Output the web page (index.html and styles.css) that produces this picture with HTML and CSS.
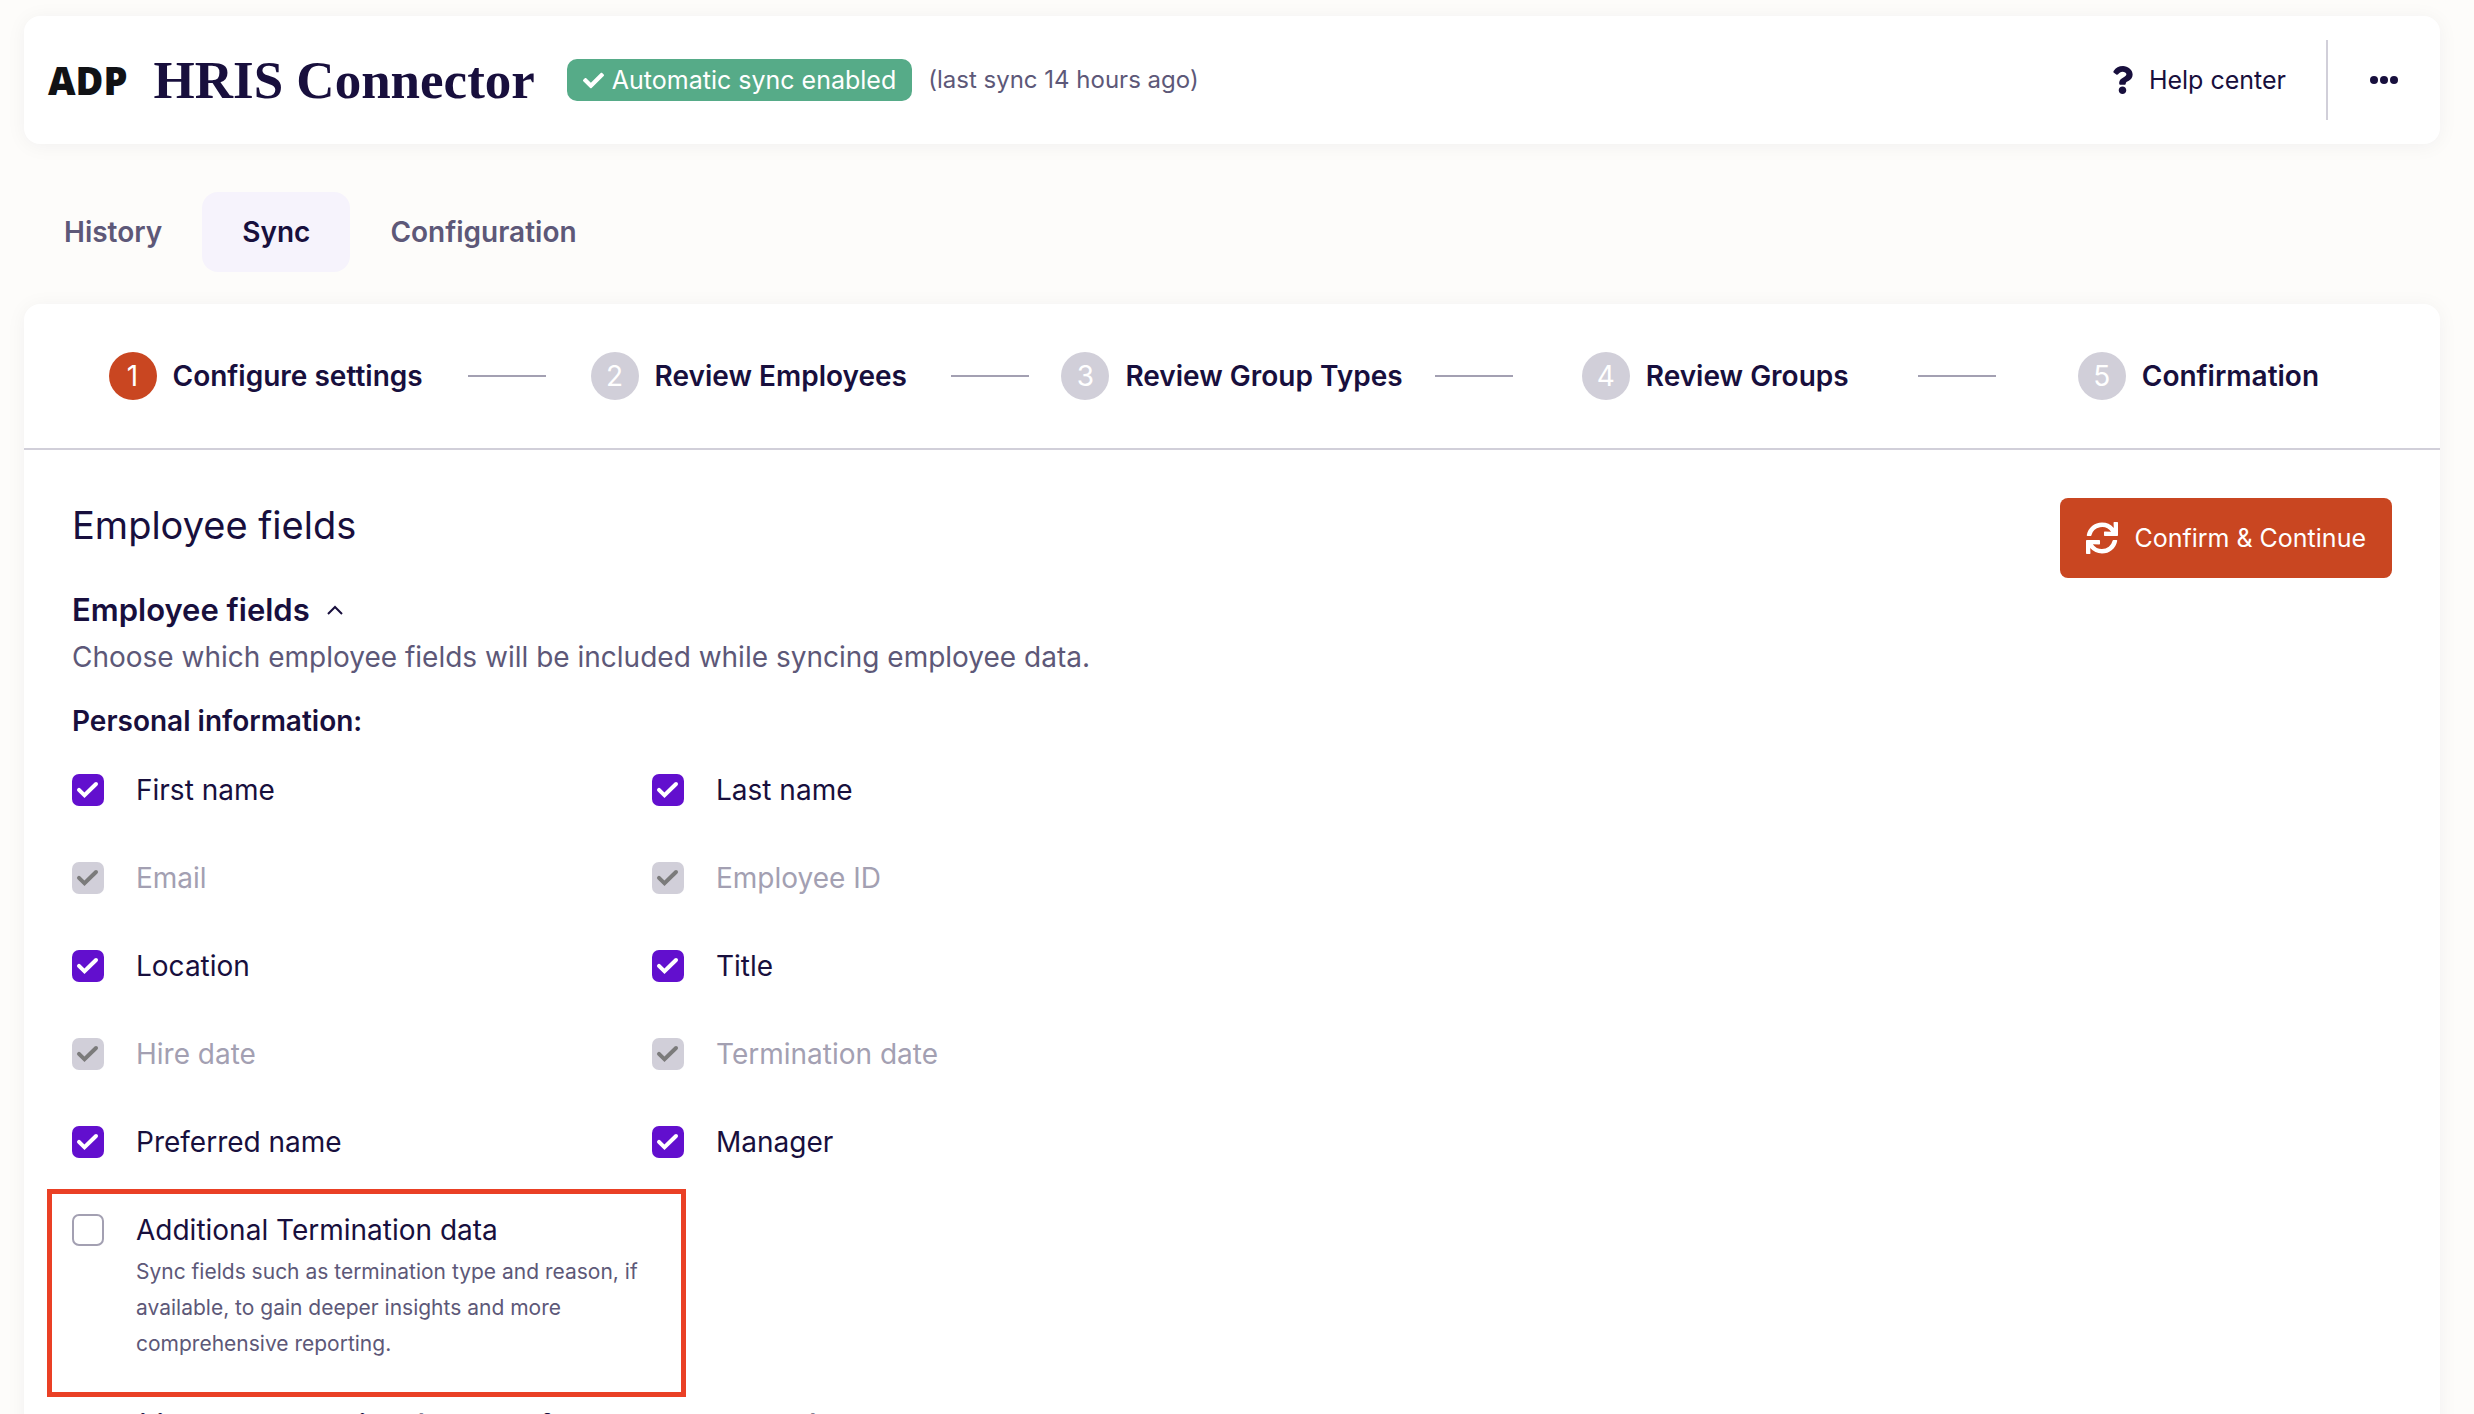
FILE: index.html
```html
<!DOCTYPE html>
<html lang="en">
<head>
<meta charset="utf-8">
<meta name="viewport" content="width=device-width, initial-scale=1">
<title>HRIS Connector</title>
<link rel="stylesheet" href="styles.css">
</head>
<body>
<div class="app">
  <header class="topbar">
    <span class="brand">ADP</span>
    <h1 class="title">HRIS Connector</h1>
    <span class="badge">
      <svg class="badge-icon" viewBox="0 0 512 512" aria-hidden="true"><path fill="currentColor" d="M173.898 439.404l-166.4-166.4c-9.997-9.997-9.997-26.206 0-36.204l36.203-36.204c9.997-9.998 26.207-9.998 36.204 0L192 312.69 432.095 72.596c9.997-9.997 26.207-9.997 36.204 0l36.203 36.204c9.997 9.997 9.997 26.206 0 36.204l-294.4 294.401c-9.998 9.997-26.207 9.997-36.204-.001z"/></svg>
      Automatic sync enabled
    </span>
    <span class="last-sync">(last sync 14 hours ago)</span>
    <a class="help" href="#help">
      <svg class="help-icon" viewBox="0 0 384 512" aria-hidden="true"><path fill="currentColor" d="M202.021 0C122.202 0 70.503 32.703 29.914 91.026c-7.363 10.58-5.093 25.086 5.178 32.874l43.138 32.709c10.373 7.865 25.132 6.026 33.253-4.148 25.049-31.381 43.63-49.449 82.757-49.449 30.764 0 68.816 19.799 68.816 49.631 0 22.552-18.617 34.134-48.993 51.164-35.423 19.86-82.299 44.576-82.299 106.405V320c0 13.255 10.745 24 24 24h72.471c13.255 0 24-10.745 24-24v-5.773c0-42.86 125.268-44.645 125.268-160.627C377.504 66.256 286.902 0 202.021 0zM192 373.459c-38.196 0-69.271 31.075-69.271 69.271 0 38.195 31.075 69.27 69.271 69.27s69.271-31.075 69.271-69.271-31.075-69.27-69.271-69.27z"/></svg>
      Help center
    </a>
    <button class="more" type="button" aria-label="More actions">
      <svg class="more-icon" viewBox="0 0 28 8" aria-hidden="true"><g fill="currentColor"><circle cx="4" cy="4" r="4"/><circle cx="14" cy="4" r="4"/><circle cx="24" cy="4" r="4"/></g></svg>
    </button>
  </header>

  <nav class="tabs" aria-label="Sections">
    <a class="tab" href="#history">History</a>
    <a class="tab tab-active" href="#sync" aria-current="page">Sync</a>
    <a class="tab" href="#configuration">Configuration</a>
  </nav>

  <main class="panel">
    <ol class="steps">
      <li class="step step-current"><span class="step-body"><span class="step-number">1</span>Configure settings</span></li>
      <li class="step"><span class="step-body"><span class="step-number">2</span>Review Employees</span></li>
      <li class="step"><span class="step-body"><span class="step-number">3</span>Review Group Types</span></li>
      <li class="step"><span class="step-body"><span class="step-number">4</span>Review Groups</span></li>
      <li class="step"><span class="step-body"><span class="step-number">5</span>Confirmation</span></li>
    </ol>

    <div class="content">
      <div class="intro">
        <div class="intro-text">
          <h2 class="heading">Employee fields</h2>
          <h3 class="subheading">
            <button class="toggle" type="button" aria-expanded="true">
              Employee fields
              <svg class="chevron" viewBox="0 0 16 10" aria-hidden="true"><path d="M1 9l7-7 7 7" fill="none" stroke="currentColor" stroke-width="2"/></svg>
            </button>
          </h3>
          <p class="lead">Choose which employee fields will be included while syncing employee data.</p>
        </div>
        <button class="confirm" type="button">
          <svg class="confirm-icon" viewBox="0 0 512 512" aria-hidden="true"><path fill="currentColor" d="M440.65 12.57l4 82.77A247.16 247.16 0 0 0 255.83 8C134.73 8 33.91 94.92 12.29 209.82A12 12 0 0 0 24.09 224h49.05a12 12 0 0 0 11.67-9.26 175.91 175.91 0 0 1 317-56.94l-101.46-4.86a12 12 0 0 0-12.57 12v47.41a12 12 0 0 0 12 12H500a12 12 0 0 0 12-12V12a12 12 0 0 0-12-12h-47.37a12 12 0 0 0-11.98 12.57zM255.83 432a175.61 175.61 0 0 1-146-77.8l101.8 4.87a12 12 0 0 0 12.57-12v-47.4a12 12 0 0 0-12-12H12a12 12 0 0 0-12 12V500a12 12 0 0 0 12 12h47.35a12 12 0 0 0 12-12.6l-4.15-82.57A247.17 247.17 0 0 0 255.83 504c121.11 0 221.93-86.92 243.55-201.82a12 12 0 0 0-11.8-14.18h-49.05a12 12 0 0 0-11.67 9.26A175.86 175.86 0 0 1 255.83 432z"/></svg>
          Confirm &amp; Continue
        </button>
      </div>

      <section aria-labelledby="personal">
        <h4 class="group-title" id="personal">Personal information:</h4>
        <div class="fields">
          <div class="field"><input class="check" type="checkbox" id="first-name" checked><label for="first-name">First name</label></div>
          <div class="field"><input class="check" type="checkbox" id="last-name" checked><label for="last-name">Last name</label></div>
          <div class="field"><input class="check" type="checkbox" id="email" checked disabled><label for="email">Email</label></div>
          <div class="field"><input class="check" type="checkbox" id="employee-id" checked disabled><label for="employee-id">Employee ID</label></div>
          <div class="field"><input class="check" type="checkbox" id="location" checked><label for="location">Location</label></div>
          <div class="field"><input class="check" type="checkbox" id="job-title" checked><label for="job-title">Title</label></div>
          <div class="field"><input class="check" type="checkbox" id="hire-date" checked disabled><label for="hire-date">Hire date</label></div>
          <div class="field"><input class="check" type="checkbox" id="termination-date" checked disabled><label for="termination-date">Termination date</label></div>
          <div class="field"><input class="check" type="checkbox" id="preferred-name" checked><label for="preferred-name">Preferred name</label></div>
          <div class="field"><input class="check" type="checkbox" id="manager" checked><label for="manager">Manager</label></div>
          <div class="field field-highlighted">
            <input class="check" type="checkbox" id="termination-data" aria-describedby="termination-help">
            <div>
              <label for="termination-data">Additional Termination data</label>
              <p class="hint" id="termination-help">Sync fields such as termination type and reason, if available, to gain deeper insights and more comprehensive reporting.</p>
            </div>
          </div>
        </div>
      </section>

      <section aria-labelledby="demographics">
        <h4 class="group-title group-title-next" id="demographics">Sensitive demographics: (enabled for some customers)</h4>
      </section>
    </div>
  </main>
</div>
</body>
</html>
```
FILE: styles.css
```css
:root {
  --ink: #180f3d;
  --muted: #5d5878;
  --faint: #a3a0b2;
  --line: #d1cfd9;
  --purple: #620fce;
  --orange: #c94621;
  --green: #56ab88;
  --alert: #ea4025;
}

*,
*::before,
*::after {
  box-sizing: border-box;
}

body {
  margin: 0;
  background: #fdfcfa;
  color: var(--ink);
  font: 400 28px/32px Inter, "Liberation Sans", sans-serif;
}

h1, h2, h3, h4, p, ol {
  margin: 0;
  padding: 0;
}

a {
  color: inherit;
  text-decoration: none;
}

button {
  border: 0;
  padding: 0;
  background: none;
  color: inherit;
  font: inherit;
  cursor: pointer;
}

.app {
  height: 100vh;
  overflow: hidden;
  padding: 16px 34px 0 24px;
}

/* Header */

.topbar,
.panel {
  background: #fff;
  box-shadow: 0 2px 20px rgba(24, 15, 61, 0.05);
}

.topbar {
  display: flex;
  align-items: center;
  padding-left: 24px;
  min-height: 128px;
  border-radius: 16px;
}

.brand {
  color: #111215;
  font: 800 38px/48px "Open Sans", sans-serif;
}

.title {
  margin-left: 26px;
  font: 700 53px/64px "Liberation Serif", serif;
}

.badge {
  display: flex;
  align-items: center;
  gap: 8px;
  margin-left: 32px;
  padding: 5px 16px;
  border-radius: 10px;
  background: var(--green);
  color: #fff;
  font-size: 25px;
}

.badge-icon {
  width: 21px;
  height: 21px;
}

.last-sync {
  margin-left: 16px;
  color: var(--muted);
  font-size: 24px;
}

.help {
  display: flex;
  align-items: center;
  gap: 16px;
  margin-left: auto;
  padding: 24px 40px;
  border-right: 2px solid var(--line);
  font-size: 25px;
}

.help-icon {
  width: 21px;
  height: 28px;
}

.more {
  display: flex;
  align-items: center;
  justify-content: center;
  width: 112px;
  height: 80px;
}

.more-icon {
  width: 28px;
  height: 8px;
}

/* Tabs */

.tabs {
  display: flex;
  margin: 48px 0 32px;
}

.tab {
  padding: 24px 40px;
  border-radius: 16px;
  color: var(--muted);
  font-weight: 600;
}

.tab-active {
  background: #f6f3fc;
  color: var(--ink);
}

/* Steps */

.panel {
  min-height: 100%;
  border-radius: 16px 16px 0 0;
}

.steps {
  display: grid;
  grid-template-columns: repeat(5, 1fr);
  padding: 48px 0;
  border-bottom: 2px solid var(--line);
  list-style: none;
}

.step {
  display: grid;
  grid-template-columns: 1fr auto 1fr;
  align-items: center;
  font-weight: 600;
}

.step-body {
  display: flex;
  grid-column: 2;
  align-items: center;
  gap: 16px;
}

.step:not(:last-child)::after {
  content: "";
  justify-self: end;
  width: 78px;
  height: 2px;
  margin-right: -39px;
  background: var(--faint);
}

.step-number {
  display: flex;
  align-items: center;
  justify-content: center;
  width: 48px;
  height: 48px;
  border-radius: 50%;
  background: var(--line);
  color: #fff;
  font-weight: 400;
}

.step-current .step-number {
  background: var(--orange);
}

/* Content */

.content {
  padding: 48px;
}

.intro {
  display: flex;
  align-items: flex-start;
  justify-content: space-between;
}

.heading {
  font-size: 38px;
  font-weight: 400;
  line-height: 54px;
}

.subheading {
  margin-top: 38px;
  font-size: 31px;
  font-weight: 600;
  line-height: 40px;
}

.toggle {
  display: flex;
  align-items: center;
  gap: 17px;
}

.chevron {
  width: 16px;
  height: 10px;
}

.lead {
  margin-top: 8px;
  color: var(--muted);
  line-height: 38px;
}

.confirm {
  display: flex;
  align-items: center;
  gap: 16px;
  padding: 24px 26px;
  border-radius: 8px;
  background: var(--orange);
  color: #fff;
  font-size: 25px;
}

.confirm-icon {
  width: 32px;
  height: 32px;
}

.group-title {
  margin-top: 26px;
  font-size: 28px;
  font-weight: 600;
  line-height: 38px;
}

.group-title-next {
  margin-top: 44px;
}

.fields {
  display: grid;
  grid-template-columns: repeat(2, 580px);
  row-gap: 56px;
  margin-top: 34px;
}

.field {
  display: flex;
  align-items: flex-start;
  gap: 32px;
}

.field label {
  display: block;
}

.check {
  appearance: none;
  flex: none;
  width: 32px;
  height: 32px;
  margin: 0;
  border: 2px solid var(--faint);
  border-radius: 7px;
  background: #fff;
}

.check:checked {
  border: 0;
  background: var(--purple) url("data:image/svg+xml,%3Csvg xmlns='http://www.w3.org/2000/svg' viewBox='0 0 32 32'%3E%3Cpath d='M7 15.800l5.500 5.500L24 10' fill='none' stroke='%23fff' stroke-width='4' stroke-linecap='round'/%3E%3C/svg%3E");
}

.check:disabled {
  background: var(--line) url("data:image/svg+xml,%3Csvg xmlns='http://www.w3.org/2000/svg' viewBox='0 0 32 32'%3E%3Cpath d='M7 15.800l5.500 5.500L24 10' fill='none' stroke='%237b7b7b' stroke-width='4' stroke-linecap='round'/%3E%3C/svg%3E");
}

.check:disabled + label {
  color: var(--faint);
}

.hint {
  max-width: 516px;
  margin-top: 8px;
  color: var(--muted);
  font-size: 21px;
  line-height: 36px;
}

/* Callout frame drawn around the new option */

.field-highlighted {
  position: relative;
}

.field-highlighted::before {
  content: "";
  position: absolute;
  inset: -25px -34px -35px -25px;
  border: 5px solid var(--alert);
  pointer-events: none;
}
```
